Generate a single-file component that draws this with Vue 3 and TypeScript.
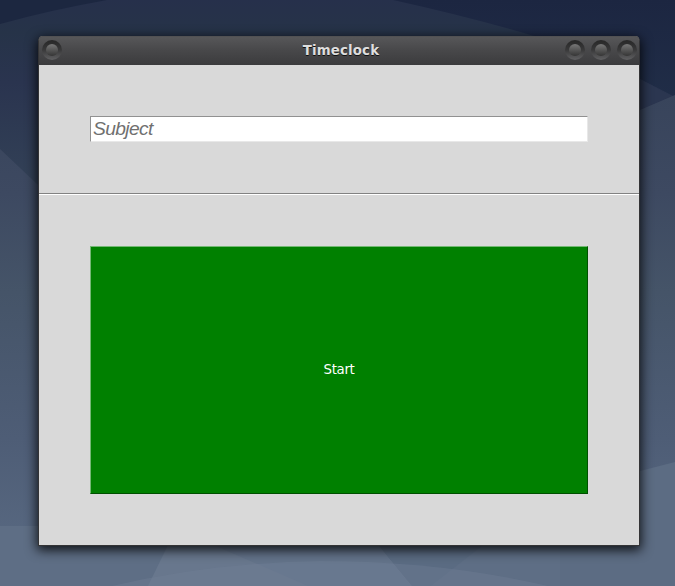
<script setup lang="ts">
import { ref } from 'vue'

const subject = ref<string>('')
const windowControls: string[] = ['Minimize', 'Maximize', 'Close']
</script>

<template>
  <main class="desktop">
    <svg class="wallpaper" viewBox="0 0 675 586" preserveAspectRatio="none" aria-hidden="true">
      <defs>
        <linearGradient id="sky" x1="0" y1="0" x2="0" y2="1">
          <stop offset="0" stop-color="#26304b" />
          <stop offset="0.055" stop-color="#263348" />
          <stop offset="0.14" stop-color="#2a344f" />
          <stop offset="0.34" stop-color="#344358" />
          <stop offset="1" stop-color="#5c6e86" />
        </linearGradient>
        <linearGradient id="slope" gradientUnits="userSpaceOnUse" x1="0" y1="95" x2="0" y2="586">
          <stop offset="0" stop-color="#38445b" />
          <stop offset="0.2" stop-color="#3d4961" />
          <stop offset="0.4" stop-color="#455468" />
          <stop offset="0.7" stop-color="#4e5d76" />
          <stop offset="1" stop-color="#5b6c84" />
        </linearGradient>
        <linearGradient id="night" x1="0" y1="0" x2="0" y2="1">
          <stop offset="0" stop-color="#1c2641" />
          <stop offset="1" stop-color="#202d47" />
        </linearGradient>
      </defs>
      <rect width="675" height="586" fill="url(#sky)" />
      <path d="M0 0H107Q50 10 0 24Z" fill="#1c2740" />
      <path d="M393 0H675V97L640 79L534 36Q470 17 393 0Z" fill="url(#night)" />
      <path d="M640 79L672 96L640 110L580 80Z" fill="#2b3650" />
      <path d="M0 149L38 185L200 340V586H0Z" fill="url(#slope)" />
      <path d="M675 95L640 110L500 200V586H675Z" fill="url(#slope)" />
      <path d="M0 526H675V586H0Z" fill="#5e6e85" />
      <path d="M675 462L640 471L560 490V586H675Z" fill="#5c6c83" />
      <path d="M168 545L148 586H412L378 545Z" fill="#68778d" />
      <path d="M378 545H483L431 586H412Z" fill="#5a6b82" />
      <path d="M225 550L308 586H411L379 546H216Z" fill="#63738a" />
      <path d="M112 586Q210 563 320 561Q440 561 548 586Z" fill="#748197" fill-opacity=".35" />
    </svg>

    <section class="window">
      <header class="titlebar">
        <button class="knob" aria-label="Menu"></button>
        <h1 class="title">Timeclock</h1>
        <div class="controls">
          <button v-for="name in windowControls" :key="name" class="knob" :aria-label="name"></button>
        </div>
      </header>
      <div class="entry-pane">
        <input v-model="subject" class="subject" type="text" placeholder="Subject" />
      </div>
      <div class="separator"></div>
      <div class="action-pane">
        <button class="start">Start</button>
      </div>
    </section>
  </main>
</template>

<style>
body {
  margin: 0;
  overflow: hidden;
}
</style>

<style scoped>
.desktop {
  position: relative;
  box-sizing: border-box;
  width: 675px;
  height: 586px;
  padding: 36px 35px 40px 38px;
  overflow: hidden;
}

.wallpaper {
  position: absolute;
  inset: 0;
  width: 100%;
  height: 100%;
}

.window {
  position: relative;
  display: flex;
  flex-direction: column;
  box-sizing: border-box;
  width: 602px;
  height: 510px;
  border: solid #343436;
  border-width: 0 1px 1px;
  border-radius: 5px 5px 0 0;
  background: #d9d9d9;
  box-shadow: 0 3px 12px 1px rgba(0, 0, 0, 0.85);
}

.titlebar {
  display: grid;
  grid-template-columns: 99px 1fr 97px;
  align-items: center;
  box-sizing: border-box;
  height: 29px;
  padding: 0 2px 1px 3px;
  border-radius: 4px 4px 0 0;
  background: linear-gradient(#58585a, #49494b 45%, #3b3b3d);
  box-shadow: inset 0 1px #515153;
}

.title {
  margin: 0;
  padding: 2px 0 0 1px;
  color: #dedede;
  font: bold 13.33px/18px "DejaVu Sans", sans-serif;
  letter-spacing: 0.15px;
  text-align: center;
  text-shadow: 0 1px #111;
}

.controls {
  display: flex;
  justify-content: flex-end;
  gap: 6px;
}

.knob {
  display: grid;
  place-items: center;
  box-sizing: border-box;
  width: 20px;
  height: 20px;
  padding: 0;
  border: 0;
  border-radius: 50%;
  background: linear-gradient(#272727, #383839 48%, #606062);
}

.knob::before {
  content: "";
  width: 12px;
  height: 12px;
  border-radius: 50%;
  background: linear-gradient(#777, #353535);
}

.entry-pane {
  display: flex;
  box-sizing: border-box;
  height: 128px;
  padding: 51px;
}

.subject {
  box-sizing: border-box;
  width: 100%;
  height: 26px;
  padding: 0 2px;
  border: 1px solid;
  border-color: #919191 #e8e8e8 #e8e8e8 #919191;
  border-radius: 0;
  outline: 0;
  background: #fff;
  color: #222;
  font: italic 19.2px/24px "Liberation Sans", Arial, sans-serif;
  letter-spacing: -0.6px;
}

.subject::placeholder {
  color: #707070;
  opacity: 1;
}

.separator {
  height: 2px;
  box-sizing: border-box;
  border-top: 1px solid #828282;
  background: #fff;
}

.action-pane {
  display: flex;
  flex: 1;
  padding: 51px;
}

.start {
  flex: 1;
  padding: 0;
  border: 1px solid;
  border-color: #75b875 #005000 #005000 #75b875;
  border-radius: 0;
  background: #008000;
  color: #fff;
  font: 13.33px/16px "DejaVu Sans", sans-serif;
  letter-spacing: -0.3px;
}
</style>
